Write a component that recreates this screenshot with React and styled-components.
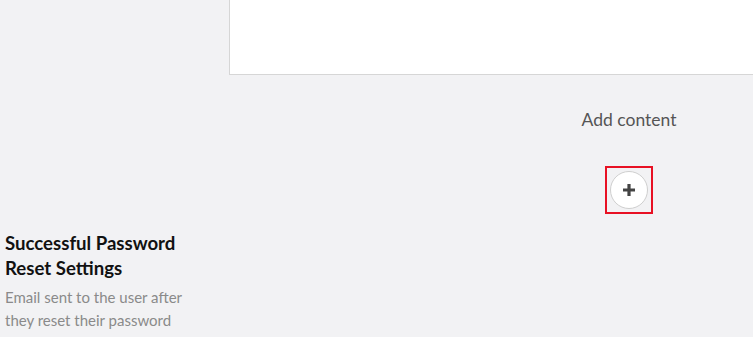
import React from 'react'
import styled, { createGlobalStyle } from 'styled-components'

const GlobalStyle = createGlobalStyle`
  html, body {
    margin: 0;
    padding: 0;
    background: #f2f2f4;
    font-family: Lato, "Open Sans", sans-serif;
  }
`

const Viewport = styled.div`
  width: 753px;
  height: 337px;
  overflow: hidden;
`

const Page = styled.div`
  display: grid;
  grid-template-columns: 229px 800px;
  width: 1029px;
`

const Side = styled.div`
  padding: 3px 0 0 5px;
`

const Main = styled.div`
  display: flex;
  flex-direction: column;
`

const Card = styled.div`
  height: 74px;
  background: #fff;
  border-left: 1px solid #d6d6d6;
  border-bottom: 1px solid #d6d6d6;
`

const AddArea = styled.div`
  display: flex;
  flex-direction: column;
  align-items: center;
  padding-top: 34px;
  height: 119px;
`

const AddLabel = styled.div`
  font-size: 17.5px;
  line-height: 22px;
  color: #555;
`

const FocusRing = styled.span`
  margin-top: 35px;
  display: flex;
  padding: 3px;
  border: 2px solid #e81123;
`

const AddButton = styled.button`
  width: 38px;
  height: 38px;
  border-radius: 50%;
  border: 1px solid #cfcfcf;
  background: #fff;
  display: flex;
  align-items: center;
  justify-content: center;
  padding: 0;
  cursor: pointer;
`

const Title = styled.h3`
  margin: 0;
  font-size: 18.6px;
  line-height: 25px;
  font-weight: 700;
  color: #111;
  width: 195px;
`

const Desc = styled.p`
  margin: 5px 0 0;
  font-size: 15px;
  line-height: 23px;
  color: #8a8a8a;
  width: 200px;
`

export default function App() {
  return (
    <>
      <GlobalStyle />
      <Viewport>
        <Page>
          <div />
          <Main>
            <Card />
            <AddArea>
              <AddLabel>Add content</AddLabel>
              <FocusRing>
                <AddButton aria-label="Add content">
                  <svg width="14" height="14" viewBox="0 0 14 14">
                    <path d="M7 1v12M1 7h12" stroke="#444" strokeWidth="3.2" />
                  </svg>
                </AddButton>
              </FocusRing>
            </AddArea>
          </Main>
          <Side>
            <Title>Successful Password Reset Settings</Title>
            <Desc>Email sent to the user after they reset their password</Desc>
          </Side>
          <div />
        </Page>
      </Viewport>
    </>
  )
}
